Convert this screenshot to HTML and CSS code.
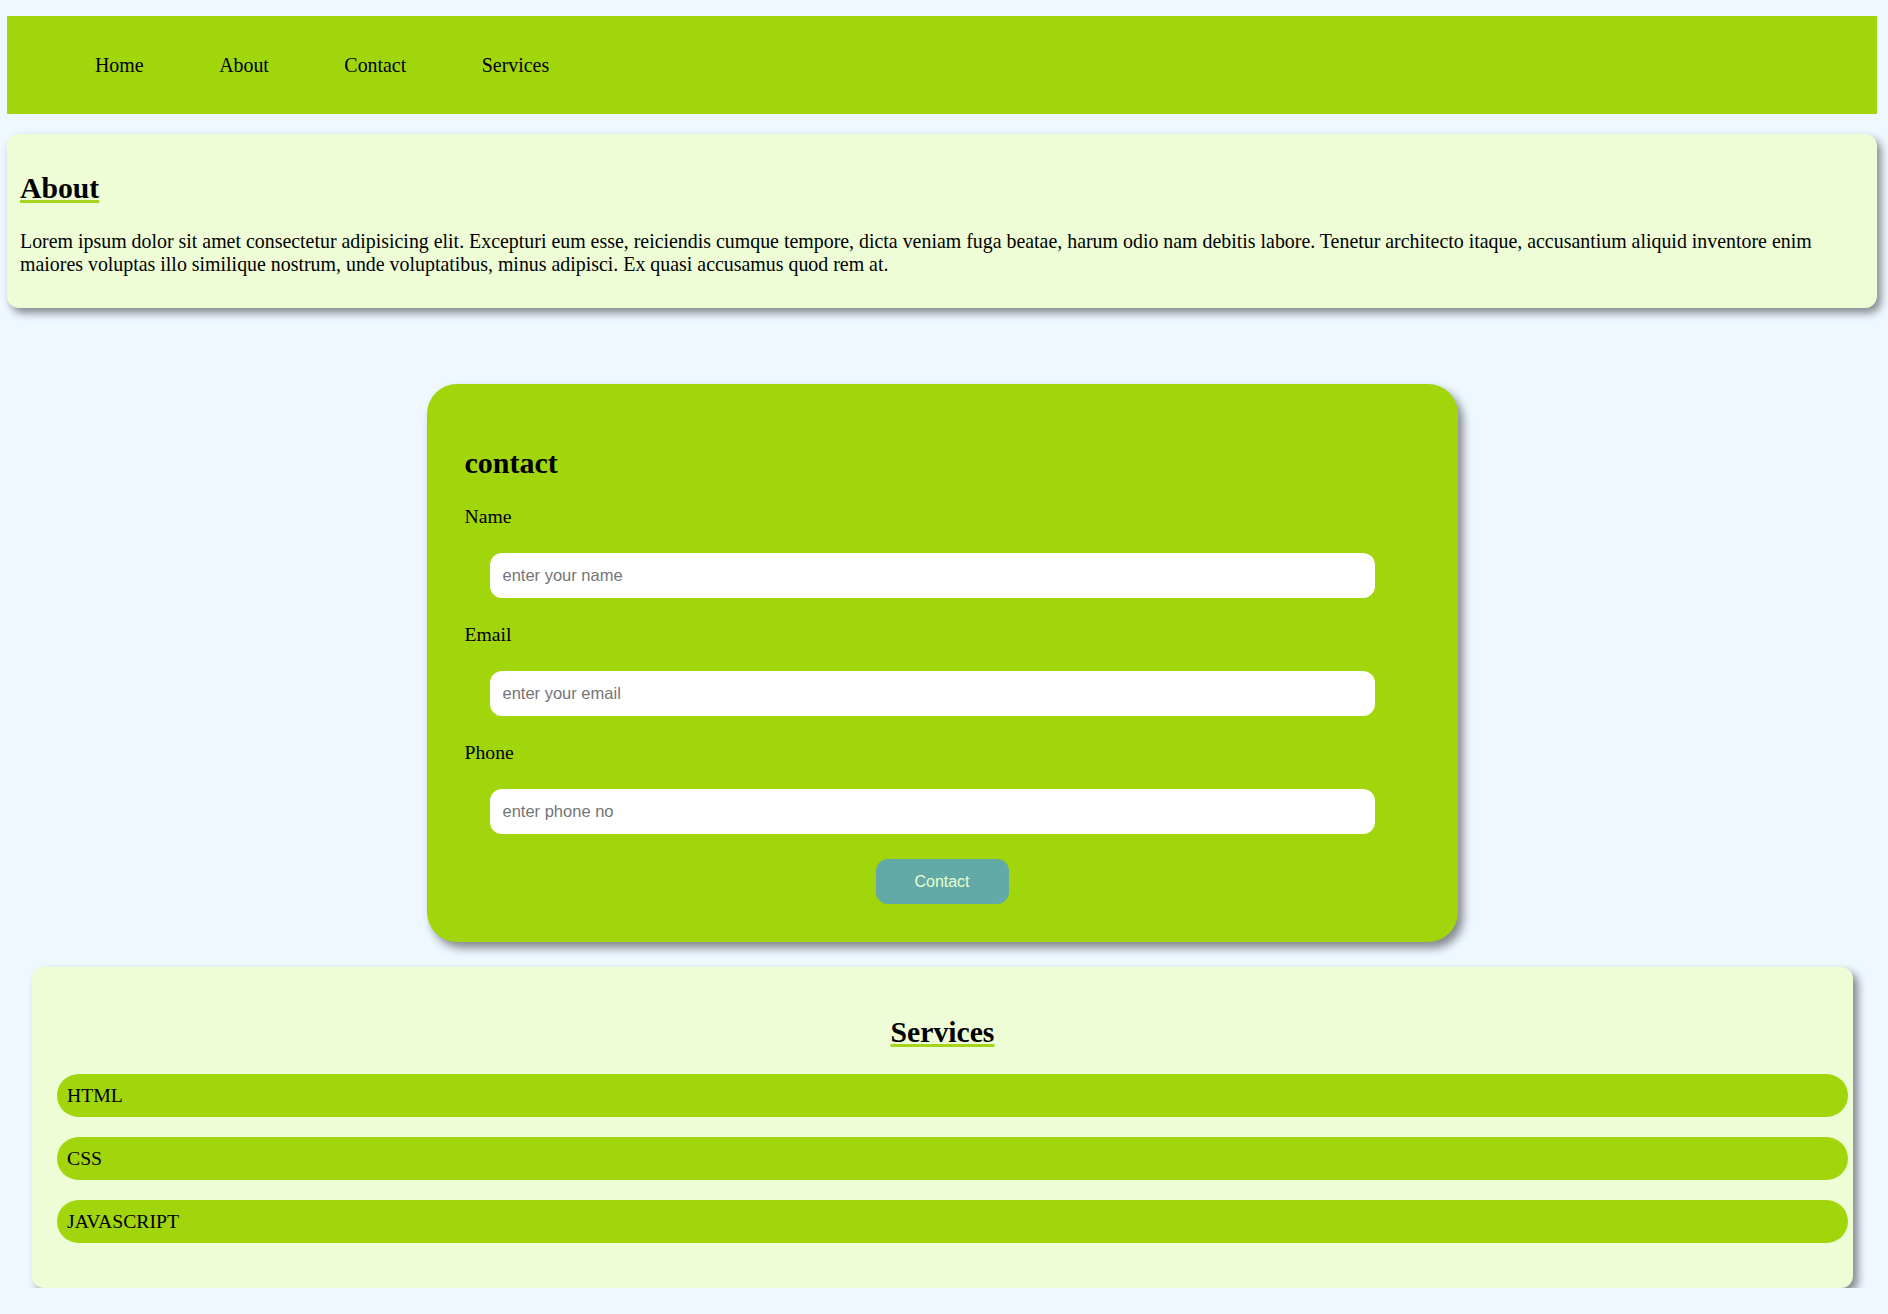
FILE: index.html
```html
<!DOCTYPE html>
<html lang="en">
<head>
<meta charset="utf-8">
<title>Portfolio</title>
<link rel="stylesheet" href="styles.css">
</head>
<body>
<div class="page">
  <nav class="nav">
    <a class="nav-link" href="#home">Home</a>
    <a class="nav-link" href="#about">About</a>
    <a class="nav-link" href="#contact">Contact</a>
    <a class="nav-link" href="#services">Services</a>
  </nav>

  <section class="about" id="about">
    <h2 class="title"><span class="title-text">About</span></h2>
    <p class="about-text">Lorem ipsum dolor sit amet consectetur adipisicing elit. Excepturi eum esse, reiciendis cumque tempore, dicta veniam fuga beatae, harum odio nam debitis labore. Tenetur architecto itaque, accusantium aliquid inventore enim maiores voluptas illo similique nostrum, unde voluptatibus, minus adipisci. Ex quasi accusamus quod rem at.</p>
  </section>

  <section class="contact" id="contact">
    <h2 class="contact-title">contact</h2>
    <label class="field-label" for="name">Name</label>
    <input class="field" id="name" type="text" placeholder="enter your name">
    <label class="field-label" for="email">Email</label>
    <input class="field" id="email" type="text" placeholder="enter your email">
    <label class="field-label" for="phone">Phone</label>
    <input class="field" id="phone" type="text" placeholder="enter phone no">
    <button class="contact-btn" type="button">Contact</button>
  </section>

  <section class="services" id="services">
    <h2 class="title services-title"><span class="title-text">Services</span></h2>
    <ul class="service-list">
      <li class="service">HTML</li>
      <li class="service">CSS</li>
      <li class="service">JAVASCRIPT</li>
    </ul>
  </section>
</div>
</body>
</html>
```

FILE: styles.css
```css
* {
  box-sizing: border-box;
}

html, body {
  margin: 0;
  padding: 0;
}

body {
  background: #eff7ff;
  font-family: "Liberation Serif", "Times New Roman", serif;
  font-size: 19.7px;
  line-height: 23px;
  color: #000;
}

.page {
  padding: 16px 11px 0 7px;
}

.nav {
  height: 98px;
  background: #a1d60c;
  display: flex;
  align-items: center;
  gap: 75.5px;
  padding-left: 88px;
}

.nav-link {
  color: #000;
  text-decoration: none;
  font-size: 19.9px;
}

.about {
  margin-top: 20px;
  background: #eefdd6;
  border-radius: 12px;
  box-shadow: 4px 5px 8px rgba(0, 0, 0, 0.45);
  padding: 37px 13px 32px;
}

.title {
  margin: 0;
  font-size: 29.7px;
  line-height: 34px;
  font-weight: bold;
}

.title-text {
  text-decoration: underline;
  text-decoration-color: #a4d41c;
  text-decoration-thickness: 3px;
  text-underline-offset: 2px;
}

.about-text {
  margin: 25px 0 0;
  font-size: 19.9px;
}

.contact {
  width: 1031px;
  margin: 76px auto 0;
  background: #a1d60c;
  border-radius: 30px;
  box-shadow: 5px 6px 10px rgba(0, 0, 0, 0.45);
  padding: 62px 83px 38px 38px;
  display: flex;
  flex-direction: column;
  gap: 25px;
}

.contact-title {
  margin: 0;
  font-size: 30px;
  line-height: 34px;
  font-weight: bold;
}

.field-label {
  display: block;
  font-size: 19.7px;
  line-height: 23px;
}

.field {
  display: block;
  margin-left: 25px;
  width: 885px;
  height: 45px;
  border: none;
  border-radius: 12px;
  background: #fff;
  padding: 0 13px;
  font-family: "Liberation Sans", Arial, sans-serif;
  font-size: 16.5px;
  color: #000;
  outline: none;
}

.field::placeholder {
  color: #757575;
}

.contact-btn {
  align-self: center;
  margin-left: 45px;
  width: 133px;
  height: 45px;
  border: none;
  border-radius: 12px;
  background: #63a9a8;
  color: #e8ffcc;
  font-family: "Liberation Sans", Arial, sans-serif;
  font-size: 16px;
  cursor: pointer;
}

.services {
  margin: 25px 24px 0 25px;
  background: #eefdd6;
  border-radius: 12px;
  box-shadow: 5px 5px 8px rgba(0, 0, 0, 0.45);
  padding: 48px 5px 45px 25px;
}

.services-title {
  text-align: center;
  margin-right: 20px;
}

.service-list {
  list-style: none;
  margin: 25px 0 0;
  padding: 0;
  display: flex;
  flex-direction: column;
  gap: 20px;
}

.service {
  height: 43px;
  background: #a1d60c;
  border-radius: 22px;
  padding: 10px 10px 0;
  line-height: 23px;
}
```
